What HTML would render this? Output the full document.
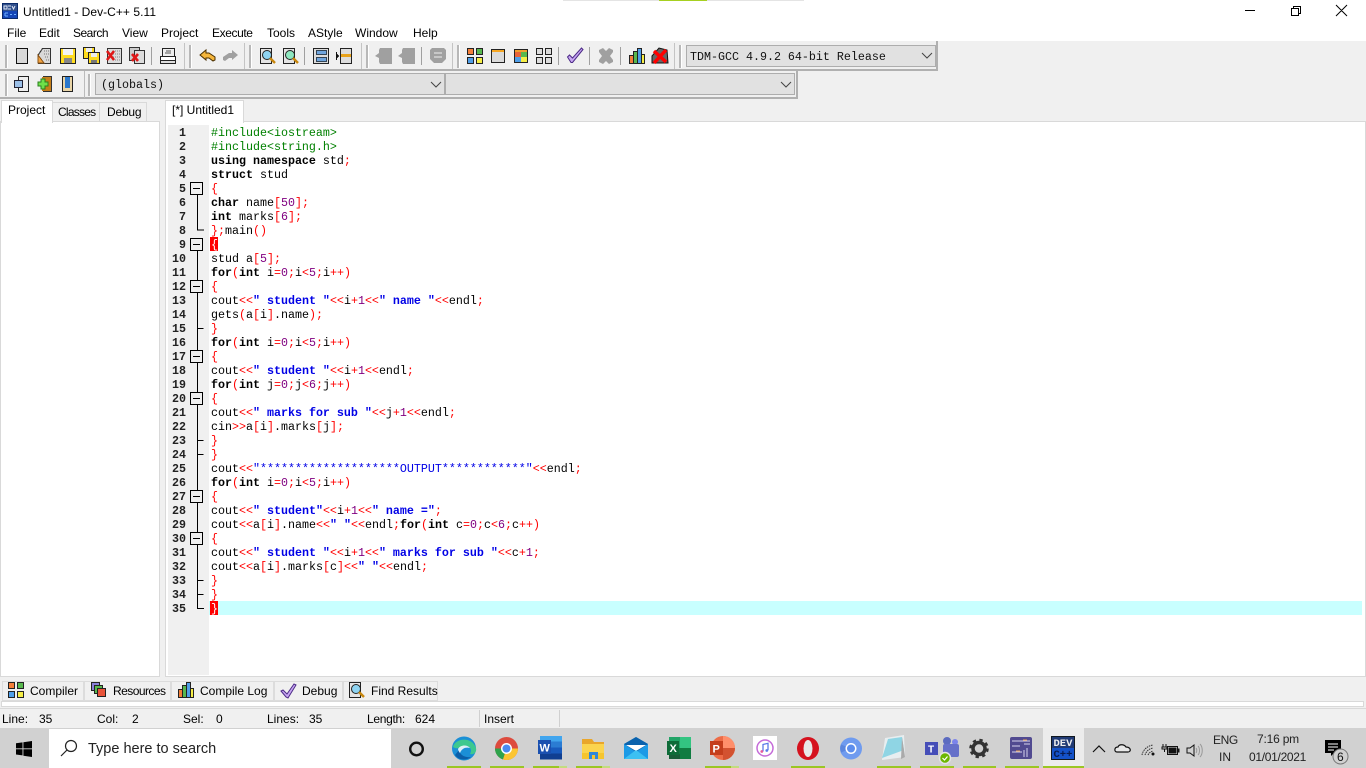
<!DOCTYPE html>
<html><head><meta charset="utf-8"><title>Untitled1 - Dev-C++ 5.11</title>
<style>
html,body{margin:0;padding:0;width:1366px;height:768px;overflow:hidden;background:#f0f0f0;font-family:"Liberation Sans",sans-serif;font-size:12px;color:#000}
.a,.t,svg.i{position:absolute}
.t{white-space:nowrap;line-height:14px}
.m{top:26px}
.gr{position:absolute;width:2px;background:#b8b8b8;box-shadow:1px 0 0 #fff}
.sp{position:absolute;width:1px;background:#a0a0a0}
.combo{position:absolute;background:#e1e1e1;border:1px solid #adadad;box-sizing:border-box;font-family:"Liberation Mono",monospace;font-size:11.67px;color:#111}
#code{position:absolute;left:0;top:1px}
#code div{position:absolute;left:211px;height:14px;line-height:14px;white-space:pre;font-family:"Liberation Mono",monospace;font-size:11.67px;color:#000}
#code b{font-weight:bold}
#code .r,#code div.r{color:#f00}#code .n{color:#800080}#code .s{color:#0000e6;font-weight:bold}#code div.p{color:#008000}#code .u{color:#0000e6}
#code div.w{color:#fff}
.ln{position:absolute;left:0;top:1px}
.ln div{position:absolute;left:170px;width:16px;text-align:right;height:14px;line-height:14px;font-family:"Liberation Mono",monospace;font-size:11.67px;font-weight:bold;color:#222}
.btab{position:absolute;top:681px;height:20px;background:#f0f0f0;border:1px solid #dcdcdc;box-sizing:border-box}
.st{top:712px}
.bar{position:absolute;top:766px;height:2px;background:#9bc623}
</style></head><body>

<!-- title bar -->
<div class="a" style="left:0;top:0;width:1366px;height:41px;background:#fff"></div>
<div class="a" style="left:563px;top:0;width:241px;height:1px;background:#e4e4e4"></div>
<div class="a" style="left:659px;top:0;width:48px;height:1px;background:#a6d020"></div>
<svg class="i" style="left:2px;top:3px" width="16" height="16" viewBox="0 0 16 16"><rect width="16" height="16" fill="#0a2a6a"/><rect x="1" y="1" width="14" height="7" fill="#31508c"/><rect x="1" y="8" width="14" height="7" fill="#1546b8"/><path d="M2 3h3v3H2zM6 3h3M6 6h3M10 3l1.500 3L13 3" stroke="#dfe6f5" fill="none"/><path d="M3 10h3M3 13h3M3 10v3M8 11.500h2M12 11.500h2" stroke="#6fb0ff"/></svg>
<div class="t" style="left:23px;top:5px;letter-spacing:.05px">Untitled1 - Dev-C++ 5.11</div>
<svg class="i" style="left:1240px;top:0" width="126" height="20" fill="none" stroke="#000"><path d="M5 10.500h10M51.500 8.500h7v7h-7zM53.500 8.500v-2h7v7h-2M96 5l11 11M107 5L96 16"/></svg>

<!-- menu -->
<div class="t m" style="left:7px">File</div>
<div class="t m" style="left:39px">Edit</div>
<div class="t m" style="left:73px;letter-spacing:-.5px">Search</div>
<div class="t m" style="left:122px">View</div>
<div class="t m" style="left:161px">Project</div>
<div class="t m" style="left:212px;letter-spacing:-.4px">Execute</div>
<div class="t m" style="left:267px">Tools</div>
<div class="t m" style="left:308px">AStyle</div>
<div class="t m" style="left:355px">Window</div>
<div class="t m" style="left:413px">Help</div>

<!-- toolbar frames -->
<div class="a" style="left:0;top:41px;width:938px;height:30px;border-right:2px solid #b0b0b0;border-bottom:2px solid #b0b0b0;box-sizing:border-box"></div>
<div class="a" style="left:0;top:70px;width:798px;height:29px;border-right:2px solid #b0b0b0;border-bottom:2px solid #b0b0b0;box-sizing:border-box"></div>
<div class="a" style="left:84px;top:71px;width:1px;height:27px;background:#bbb"></div>
<div class="a" style="left:184px;top:43px;width:1px;height:26px;background:#c4c4c4"></div>
<div class="a" style="left:244px;top:43px;width:1px;height:26px;background:#c4c4c4"></div>
<div class="a" style="left:361px;top:43px;width:1px;height:26px;background:#c4c4c4"></div>
<div class="a" style="left:452px;top:43px;width:1px;height:26px;background:#c4c4c4"></div>
<div class="a" style="left:674px;top:43px;width:1px;height:26px;background:#c4c4c4"></div>
<div class="gr" style="left:5px;top:45px;height:23px"></div>
<div class="gr" style="left:189px;top:45px;height:23px"></div>
<div class="gr" style="left:249px;top:45px;height:23px"></div>
<div class="gr" style="left:366px;top:45px;height:23px"></div>
<div class="gr" style="left:457px;top:45px;height:23px"></div>
<div class="gr" style="left:679px;top:45px;height:23px"></div>
<div class="gr" style="left:5px;top:74px;height:22px"></div>
<div class="gr" style="left:88px;top:74px;height:22px"></div>
<div class="sp" style="left:151px;top:47px;height:18px"></div>
<div class="sp" style="left:304px;top:47px;height:18px"></div>
<div class="sp" style="left:421px;top:47px;height:18px"></div>
<div class="sp" style="left:558px;top:47px;height:18px"></div>
<div class="sp" style="left:589px;top:47px;height:18px"></div>
<div class="sp" style="left:620px;top:47px;height:18px"></div>

<!-- toolbar icons -->
<svg class="i" style="left:0;top:40px" width="690" height="60" shape-rendering="crispEdges">
<rect x="16.500" y="8.500" width="11" height="15" fill="#d8d8d8" stroke="#111"/>
<path d="M42.500 8.500h8v15h-12v-9z" fill="#d9d9d9" stroke="#333"/><path d="M38 15l6 8h-6z" fill="#f2a341" stroke="#8a5316"/><path d="M44 11h5M44 14h5M45 17h4M46 20h3" stroke="#777" stroke-dasharray="1 1"/>
<rect x="60.500" y="8.500" width="15" height="15" fill="#ffdc1e" stroke="#222"/><rect x="63" y="9" width="10" height="6" fill="#f4f4f4"/><rect x="64" y="18" width="8" height="5" fill="#888"/>
<rect x="83.500" y="7.500" width="11" height="11" fill="#ffdc1e" stroke="#222"/><rect x="86" y="8" width="6" height="4" fill="#eee"/><rect x="88.500" y="12.500" width="11" height="11" fill="#ffdc1e" stroke="#222"/><rect x="91" y="13" width="6" height="4" fill="#eee"/><rect x="91" y="20" width="6" height="3" fill="#777"/>
<rect x="107.500" y="8.500" width="14" height="15" fill="#ddd" stroke="#333"/><path d="M113 11h7M113 14h7M113 17h7M113 20h7" stroke="#888" stroke-dasharray="1 1"/><g shape-rendering="auto"><path d="M107 11l7 9M114 11l-7 9" stroke="#e01818" stroke-width="2.600"/></g>
<rect x="129.500" y="7.500" width="10" height="13" fill="#ccc" stroke="#333"/><rect x="134.500" y="10.500" width="10" height="13" fill="#ddd" stroke="#333"/><g shape-rendering="auto"><path d="M132 14l6 7M138 14l-6 7" stroke="#e01818" stroke-width="2.600"/></g>
<rect x="162.500" y="8.500" width="12" height="8" fill="#eee" stroke="#222"/><rect x="160.500" y="16.500" width="15" height="4" fill="#fff" stroke="#222"/><rect x="160.500" y="20.500" width="15" height="3" fill="#ddd" stroke="#222"/><path d="M166 11h5M165 13h6" stroke="#555"/>
<g shape-rendering="auto"><path d="M200 15l6-5v3h3l6 4v3l-2 1-4-3h-3v2z" fill="#f5b63c" stroke="#4a2f00"/>
<path d="M238 15l-6-5v3h-3l-6 4v3l2 1 4-3h3v2z" fill="#a0a0a0"/></g>
<rect x="260.500" y="8.500" width="11" height="15" fill="#e4e4e4" stroke="#222"/><g shape-rendering="auto"><circle cx="267" cy="15" r="4.500" fill="#8fd4f2" stroke="#222"/><path d="M270 18l5 5" stroke="#c8870e" stroke-width="2.500"/></g>
<rect x="283.500" y="8.500" width="11" height="15" fill="#e4e4e4" stroke="#222"/><g shape-rendering="auto"><circle cx="290" cy="15" r="4.500" fill="#8fe8c0" stroke="#222"/><path d="M293 18l5 5" stroke="#c8870e" stroke-width="2.500"/></g>
<rect x="313.500" y="8.500" width="15" height="15" fill="#ddd" stroke="#222"/><rect x="316.500" y="10.500" width="10" height="4" fill="#6fa5de" stroke="#345"/><rect x="316.500" y="17.500" width="10" height="4" fill="#6fa5de" stroke="#345"/>
<rect x="340.500" y="8.500" width="11" height="15" fill="#ddd" stroke="#222"/><rect x="341" y="14" width="10" height="3" fill="#e8a21a"/><path d="M336 13l3 3-3 3z" fill="#111"/><path d="M336.500 12v8" stroke="#111"/>
<g shape-rendering="auto"><path d="M380 8h12v16h-12l-1-2v-4l-4-2 4-3v-3z" fill="#a0a0a0"/>
<path d="M403 8h12v16h-12l-1-2v-4l-4-2 4-3v-3z" fill="#a0a0a0"/>
<path d="M432 8h12l2 2v9l-4 4h-8l-4-4v-9z" fill="#a0a0a0"/><path d="M434 13h8M434 17h8" stroke="#eee"/></g>
<rect x="467.500" y="8.500" width="6" height="6" fill="#f47f3a" stroke="#222"/><rect x="476.500" y="8.500" width="6" height="6" fill="#58b84e" stroke="#222"/><rect x="467.500" y="17.500" width="6" height="6" fill="#4f9ee8" stroke="#222"/><rect x="476.500" y="17.500" width="6" height="6" fill="#f6ee46" stroke="#222"/>
<rect x="491.500" y="9.500" width="13" height="13" fill="#dadada" stroke="#222"/><rect x="492" y="10" width="12" height="2" fill="#f5a623"/>
<rect x="514.500" y="9.500" width="13" height="13" fill="#f0a030" stroke="#222"/><rect x="515" y="12" width="6" height="5" fill="#e8643a"/><rect x="521" y="12" width="6" height="5" fill="#58b84e"/><rect x="515" y="17" width="6" height="5" fill="#4f9ee8"/><rect x="521" y="17" width="6" height="5" fill="#f6ee46"/>
<rect x="536.500" y="8.500" width="6" height="6" fill="#ddd" stroke="#222"/><rect x="545.500" y="8.500" width="6" height="6" fill="#ddd" stroke="#222"/><rect x="536.500" y="17.500" width="6" height="6" fill="#ddd" stroke="#222"/><rect x="545.500" y="17.500" width="6" height="6" fill="#ddd" stroke="#222"/>
</svg>
<svg class="i" style="left:560px;top:40px" width="120" height="32">
<path d="M7.500 17l2-2 3 3 9-10 1.500 1.500-10.500 13h-1.500z" fill="#c7a6f2" stroke="#4b2a86"/>
<path d="M39 10l4-2 3 3 3-3 4 2v2l-3 4 3 4v2l-4 2-3-3-3 3-4-2v-2l3-4-3-4z" fill="#a0a0a0"/>
<g shape-rendering="crispEdges"><rect x="69.500" y="15.500" width="4" height="8" fill="#f47f3a" stroke="#222"/><rect x="73.500" y="11.500" width="4" height="12" fill="#58b84e" stroke="#222"/><rect x="77.500" y="8.500" width="4" height="15" fill="#4f9ee8" stroke="#222"/><rect x="81.500" y="14.500" width="3" height="9" fill="#f6ee46" stroke="#222"/></g>
<path d="M92 16l7-8 8 2 1 13H92z" fill="#666" stroke="#111"/><path d="M94 11l12 11M106 10L94 23" stroke="#f00" stroke-width="3.500"/>
</svg>
<svg class="i" style="left:10px;top:70px" width="70" height="28" shape-rendering="crispEdges">
<path d="M8.500 6.500h10v15h-10v-4M8.500 10.500v-4" fill="#eee" stroke="#222"/><rect x="4.500" y="10.500" width="8" height="7" fill="#9cc0e8" stroke="#223"/>
<rect x="33.500" y="6.500" width="8" height="15" fill="#b97514" stroke="#333"/><rect x="32" y="7" width="9" height="14" fill="#c57f1a"/><path d="M27.500 14h11M33 8.500v11" stroke="#2a7f1e" stroke-width="5"/><path d="M28.500 14h9M33 9.500v9" stroke="#6ee04a" stroke-width="3"/>
<rect x="52.500" y="6.500" width="10" height="15" fill="#e9d5a8" stroke="#222"/><rect x="55" y="7" width="5" height="11" fill="#2b78cc"/>
</svg>

<!-- combos -->
<div class="combo" style="left:686px;top:45px;width:250px;height:22px;padding-left:3px;line-height:22px">TDM-GCC 4.9.2 64-bit Release</div>
<svg class="i" style="left:921px;top:52px" width="12" height="8" fill="none" stroke="#444"><path d="M1 1l5 5 5-5"/></svg>
<div class="combo" style="left:95px;top:73px;width:350px;height:22px;padding-left:5px;line-height:22px">(globals)</div>
<svg class="i" style="left:430px;top:81px" width="12" height="8" fill="none" stroke="#444"><path d="M1 1l5 5 5-5"/></svg>
<div class="combo" style="left:445px;top:73px;width:350px;height:22px"></div>
<svg class="i" style="left:780px;top:81px" width="12" height="8" fill="none" stroke="#444"><path d="M1 1l5 5 5-5"/></svg>

<!-- side tabs -->
<div class="a" style="left:0;top:121px;width:160px;height:556px;background:#fff;border:1px solid #d9d9d9;box-sizing:border-box"></div>
<div class="a" style="left:1px;top:100px;width:52px;height:23px;background:#fff;border:1px solid #d9d9d9;border-bottom:none;box-sizing:border-box"></div>
<div class="a" style="left:53px;top:102px;width:47px;height:20px;background:#f0f0f0;border:1px solid #d9d9d9;border-left:none;box-sizing:border-box"></div>
<div class="a" style="left:100px;top:102px;width:47px;height:20px;background:#f0f0f0;border:1px solid #d9d9d9;border-left:none;box-sizing:border-box"></div>
<div class="t" style="left:8px;top:103px">Project</div>
<div class="t" style="left:58px;top:105px;letter-spacing:-.75px">Classes</div>
<div class="t" style="left:107px;top:105px;letter-spacing:-.2px">Debug</div>

<!-- editor -->
<div class="a" style="left:165px;top:121px;width:1201px;height:556px;background:#fff;border:1px solid #d9d9d9;box-sizing:border-box"></div>
<div class="a" style="left:165px;top:100px;width:79px;height:23px;background:#fff;border:1px solid #d9d9d9;border-bottom:none;box-sizing:border-box"></div>
<div class="t" style="left:172px;top:103px">[*] Untitled1</div>
<div class="a" style="left:168px;top:125px;width:41px;height:550px;background:#f0f0f0"></div>
<div class="a" style="left:209px;top:601px;width:1153px;height:14px;background:#c8ffff"></div>
<div class="a" style="left:210px;top:237px;width:8px;height:14px;background:#f00"></div>
<div class="a" style="left:210px;top:601px;width:8px;height:14px;background:#f00"></div>

<div class="ln">
<div style="top:125px">1</div><div style="top:139px">2</div><div style="top:153px">3</div><div style="top:167px">4</div><div style="top:181px">5</div><div style="top:195px">6</div><div style="top:209px">7</div><div style="top:223px">8</div><div style="top:237px">9</div><div style="top:251px">10</div><div style="top:265px">11</div><div style="top:279px">12</div><div style="top:293px">13</div><div style="top:307px">14</div><div style="top:321px">15</div><div style="top:335px">16</div><div style="top:349px">17</div><div style="top:363px">18</div><div style="top:377px">19</div><div style="top:391px">20</div><div style="top:405px">21</div><div style="top:419px">22</div><div style="top:433px">23</div><div style="top:447px">24</div><div style="top:461px">25</div><div style="top:475px">26</div><div style="top:489px">27</div><div style="top:503px">28</div><div style="top:517px">29</div><div style="top:531px">30</div><div style="top:545px">31</div><div style="top:559px">32</div><div style="top:573px">33</div><div style="top:587px">34</div><div style="top:601px">35</div>
</div>

<svg class="i" style="left:185px;top:120px" width="24" height="500" shape-rendering="crispEdges" fill="#f0f0f0" stroke="#000">
<path d="M12.500 70v40h6.500M12.500 124v364.500h6.500M12.500 208.500h6M12.500 320.500h6M12.500 334.500h6M12.500 460.500h6M12.500 474.500h6" fill="none"/>
<rect x="5.500" y="62.500" width="12" height="12" /><path d="M8 68.500h7"/>
<rect x="5.500" y="118.500" width="12" height="12"/><path d="M8 124.500h7"/>
<rect x="5.500" y="160.500" width="12" height="12"/><path d="M8 166.500h7"/>
<rect x="5.500" y="230.500" width="12" height="12"/><path d="M8 236.500h7"/>
<rect x="5.500" y="272.500" width="12" height="12"/><path d="M8 278.500h7"/>
<rect x="5.500" y="370.500" width="12" height="12"/><path d="M8 376.500h7"/>
<rect x="5.500" y="412.500" width="12" height="12"/><path d="M8 418.500h7"/>
</svg>

<div id="code">
<div style="top:125px" class="p">#include&lt;iostream&gt;</div>
<div style="top:139px" class="p">#include&lt;string.h&gt;</div>
<div style="top:153px"><b>using namespace</b> std<span class="r">;</span></div>
<div style="top:167px"><b>struct</b> stud</div>
<div style="top:181px" class="r">{</div>
<div style="top:195px"><b>char</b> name<span class="r">[</span><span class="n">50</span><span class="r">];</span></div>
<div style="top:209px"><b>int</b> marks<span class="r">[</span><span class="n">6</span><span class="r">];</span></div>
<div style="top:223px"><span class="r">};</span>main<span class="r">()</span></div>
<div style="top:237px" class="w">{</div>
<div style="top:251px">stud a<span class="r">[</span><span class="n">5</span><span class="r">];</span></div>
<div style="top:265px"><b>for</b><span class="r">(</span><b>int</b> i<span class="r">=</span><span class="n">0</span><span class="r">;</span>i<span class="r">&lt;</span><span class="n">5</span><span class="r">;</span>i<span class="r">++)</span></div>
<div style="top:279px" class="r">{</div>
<div style="top:293px">cout<span class="r">&lt;&lt;</span><span class="s">" student "</span><span class="r">&lt;&lt;</span>i<span class="r">+</span><span class="n">1</span><span class="r">&lt;&lt;</span><span class="s">" name "</span><span class="r">&lt;&lt;</span>endl<span class="r">;</span></div>
<div style="top:307px">gets<span class="r">(</span>a<span class="r">[</span>i<span class="r">]</span>.name<span class="r">);</span></div>
<div style="top:321px" class="r">}</div>
<div style="top:335px"><b>for</b><span class="r">(</span><b>int</b> i<span class="r">=</span><span class="n">0</span><span class="r">;</span>i<span class="r">&lt;</span><span class="n">5</span><span class="r">;</span>i<span class="r">++)</span></div>
<div style="top:349px" class="r">{</div>
<div style="top:363px">cout<span class="r">&lt;&lt;</span><span class="s">" student "</span><span class="r">&lt;&lt;</span>i<span class="r">+</span><span class="n">1</span><span class="r">&lt;&lt;</span>endl<span class="r">;</span></div>
<div style="top:377px"><b>for</b><span class="r">(</span><b>int</b> j<span class="r">=</span><span class="n">0</span><span class="r">;</span>j<span class="r">&lt;</span><span class="n">6</span><span class="r">;</span>j<span class="r">++)</span></div>
<div style="top:391px" class="r">{</div>
<div style="top:405px">cout<span class="r">&lt;&lt;</span><span class="s">" marks for sub "</span><span class="r">&lt;&lt;</span>j<span class="r">+</span><span class="n">1</span><span class="r">&lt;&lt;</span>endl<span class="r">;</span></div>
<div style="top:419px">cin<span class="r">&gt;&gt;</span>a<span class="r">[</span>i<span class="r">]</span>.marks<span class="r">[</span>j<span class="r">];</span></div>
<div style="top:433px" class="r">}</div>
<div style="top:447px" class="r">}</div>
<div style="top:461px">cout<span class="r">&lt;&lt;</span><span class="u">"********************OUTPUT************"</span><span class="r">&lt;&lt;</span>endl<span class="r">;</span></div>
<div style="top:475px"><b>for</b><span class="r">(</span><b>int</b> i<span class="r">=</span><span class="n">0</span><span class="r">;</span>i<span class="r">&lt;</span><span class="n">5</span><span class="r">;</span>i<span class="r">++)</span></div>
<div style="top:489px" class="r">{</div>
<div style="top:503px">cout<span class="r">&lt;&lt;</span><span class="s">" student"</span><span class="r">&lt;&lt;</span>i<span class="r">+</span><span class="n">1</span><span class="r">&lt;&lt;</span><span class="s">" name ="</span><span class="r">;</span></div>
<div style="top:517px">cout<span class="r">&lt;&lt;</span>a<span class="r">[</span>i<span class="r">]</span>.name<span class="r">&lt;&lt;</span><span class="s">" "</span><span class="r">&lt;&lt;</span>endl<span class="r">;</span><b>for</b><span class="r">(</span><b>int</b> c<span class="r">=</span><span class="n">0</span><span class="r">;</span>c<span class="r">&lt;</span><span class="n">6</span><span class="r">;</span>c<span class="r">++)</span></div>
<div style="top:531px" class="r">{</div>
<div style="top:545px">cout<span class="r">&lt;&lt;</span><span class="s">" student "</span><span class="r">&lt;&lt;</span>i<span class="r">+</span><span class="n">1</span><span class="r">&lt;&lt;</span><span class="s">" marks for sub "</span><span class="r">&lt;&lt;</span>c<span class="r">+</span><span class="n">1</span><span class="r">;</span></div>
<div style="top:559px">cout<span class="r">&lt;&lt;</span>a<span class="r">[</span>i<span class="r">]</span>.marks<span class="r">[</span>c<span class="r">]&lt;&lt;</span><span class="s">" "</span><span class="r">&lt;&lt;</span>endl<span class="r">;</span></div>
<div style="top:573px" class="r">}</div>
<div style="top:587px" class="r">}</div>
<div style="top:601px" class="w">}</div>
</div>

<!-- bottom tabs -->
<div class="btab" style="left:2px;width:82px"></div>
<div class="btab" style="left:84px;width:87px"></div>
<div class="btab" style="left:171px;width:103px"></div>
<div class="btab" style="left:274px;width:69px"></div>
<div class="btab" style="left:343px;width:95px"></div>
<div class="a" style="left:1px;top:701px;width:1363px;height:6px;background:#fff;border:1px solid #d9d9d9;box-sizing:border-box"></div>
<div class="t" style="left:30px;top:684px">Compiler</div>
<div class="t" style="left:113px;top:684px;letter-spacing:-.55px">Resources</div>
<div class="t" style="left:200px;top:684px">Compile Log</div>
<div class="t" style="left:302px;top:684px">Debug</div>
<div class="t" style="left:371px;top:684px">Find Results</div>
<svg class="i" style="left:0;top:680px" width="380" height="22" shape-rendering="crispEdges">
<rect x="8.500" y="2.500" width="6" height="6" fill="#f47f3a" stroke="#222"/><rect x="17.500" y="2.500" width="6" height="6" fill="#58b84e" stroke="#222"/><rect x="8.500" y="11.500" width="6" height="6" fill="#4f9ee8" stroke="#222"/><rect x="17.500" y="11.500" width="6" height="6" fill="#f6ee46" stroke="#222"/>
<rect x="91.500" y="2.500" width="8" height="8" fill="#8a80d8" stroke="#222"/><rect x="94.500" y="5.500" width="8" height="8" fill="#58b84e" stroke="#222"/><rect x="97.500" y="8.500" width="8" height="8" fill="#e8543a" stroke="#222"/>
<rect x="178.500" y="9.500" width="4" height="8" fill="#f47f3a" stroke="#222"/><rect x="182.500" y="5.500" width="4" height="12" fill="#58b84e" stroke="#222"/><rect x="186.500" y="2.500" width="4" height="15" fill="#4f9ee8" stroke="#222"/><rect x="190.500" y="8.500" width="3" height="9" fill="#f6ee46" stroke="#222"/>
<g shape-rendering="auto"><path d="M281 11l5 6 2 1 8-13-2-1-7 10-4-4z" fill="#c7a6f2" stroke="#4b2a86"/></g>
<rect x="349.500" y="2.500" width="11" height="15" fill="#e4e4e4" stroke="#222"/><g shape-rendering="auto"><circle cx="356" cy="9" r="4.500" fill="#8fd4f2" stroke="#222"/><path d="M359 12l5 5" stroke="#c8870e" stroke-width="2.500"/></g>
</svg>

<!-- status -->
<div class="a" style="left:0;top:708px;width:1366px;height:1px;background:#d9d9d9"></div>
<div class="t st" style="left:2px">Line:</div><div class="t st" style="left:39px">35</div>
<div class="t st" style="left:97px">Col:</div><div class="t st" style="left:132px">2</div>
<div class="t st" style="left:183px">Sel:</div><div class="t st" style="left:216px">0</div>
<div class="t st" style="left:267px">Lines:</div><div class="t st" style="left:309px">35</div>
<div class="t st" style="left:367px;letter-spacing:-.3px">Length:</div><div class="t st" style="left:415px">624</div>
<div class="t st" style="left:484px">Insert</div>
<div class="a" style="left:479px;top:710px;width:1px;height:17px;background:#d0d0d0"></div>
<div class="a" style="left:559px;top:710px;width:1px;height:17px;background:#d0d0d0"></div>

<!-- taskbar -->
<div class="a" style="left:0;top:728px;width:1366px;height:40px;background:#d1d1d1"></div>
<div class="a" style="left:49px;top:729px;width:342px;height:39px;background:#fff"></div>
<div class="a" style="left:1043px;top:728px;width:41px;height:40px;background:#ececec"></div>
<svg class="i" style="left:16px;top:741px" width="16" height="16" fill="#000"><path d="M0 2.300L6.500 1.400V7.400H0zM7.400 1.300L16 0V7.400H7.400zM0 8.300H6.500V14.400L0 13.500zM7.400 8.300H16V16L7.400 14.700z"/></svg>
<svg class="i" style="left:60px;top:739px" width="18" height="18" fill="none" stroke="#222" stroke-width="1.200"><circle cx="11" cy="7" r="5.500"/><path d="M7 11l-6 6"/></svg>
<div class="t" style="left:88px;top:741px;font-size:14.500px;line-height:16px;color:#222">Type here to search</div>
<svg class="i" style="left:408px;top:740px" width="18" height="18" fill="none" stroke="#111" stroke-width="2.400"><circle cx="8.500" cy="9" r="6.300"/></svg>

<svg class="i" style="left:440px;top:730px" width="660" height="36">
<!-- edge -->
<circle cx="24" cy="18.500" r="12" fill="#1b8fd6"/><path d="M13 17c2-9 19-11 23 1 1 4-2 7-6 6 3-5-1-9-6-8-4 1-6 4-11 1z" fill="#3ec88f"/><path d="M19 20c1 5 6 8 12 7-5 4-13 3-16-2z" fill="#0b5fa8"/><path d="M18 19c2-4 9-5 12-1-4-1-8 0-10 5-1-1-2-3-2-4z" fill="#fff" opacity=".85"/>
<!-- chrome -->
<circle cx="66.500" cy="18.500" r="11.500" fill="#dd4b3e"/><path d="M66.500 18.500L55 18.500a11.500 11.500 0 0 0 8 11z" fill="#2fa34c"/><path d="M66.500 18.500l-3.500 11a11.500 11.500 0 0 0 15-11z" fill="#fbc531"/><circle cx="66.500" cy="18.500" r="5.500" fill="#fff"/><circle cx="66.500" cy="18.500" r="4" fill="#4a8af0"/>
<!-- word -->
<rect x="100" y="6" width="22" height="5.500" fill="#41a5ee"/><rect x="100" y="11.500" width="22" height="6" fill="#2b7cd3"/><rect x="100" y="17.500" width="22" height="6" fill="#185abd"/><rect x="100" y="23.500" width="22" height="6" fill="#103f91"/><rect x="98" y="10" width="13" height="14" fill="#1a50b0"/><text x="99.500" y="21.500" font-family="Liberation Sans" font-size="11" font-weight="bold" fill="#fff">W</text>
<!-- explorer -->
<path d="M142 9h10l2 3h10v5h-22z" fill="#e9a62b"/><rect x="142" y="14" width="22" height="15" fill="#fbd44e"/><rect x="142" y="23" width="22" height="6" fill="#f6c52e"/><path d="M149 29v-7h9v7h-3v-4h-3v4z" fill="#2f86d8"/>
<!-- mail -->
<path d="M184 14l12-7 12 7v15h-24z" fill="#1c9ae6"/><path d="M184 14l12-7 12 7-12 8z" fill="#0b62ad"/><path d="M186 15h20l-10 6z" fill="#fff"/><path d="M184 29l12-9 12 9z" fill="#3cc0f2"/>
<!-- excel -->
<rect x="229" y="7" width="22" height="22" fill="#21a366"/><rect x="240" y="7" width="11" height="11" fill="#33c481"/><rect x="229" y="18" width="22" height="11" fill="#107c41"/><rect x="229" y="24" width="11" height="5" fill="#185c37"/><rect x="227" y="11" width="12" height="14" fill="#0e6b38"/><text x="229.500" y="22" font-family="Liberation Sans" font-size="11" font-weight="bold" fill="#fff">X</text>
<!-- ppt -->
<circle cx="283" cy="18" r="12" fill="#ed6c47"/><path d="M283 6a12 12 0 0 1 12 12h-12z" fill="#ff8f6b"/><path d="M283 18h12a12 12 0 0 1-12 12z" fill="#d35230"/><rect x="270" y="11" width="13" height="14" fill="#c43e1c"/><text x="272.500" y="22.500" font-family="Liberation Sans" font-size="11" font-weight="bold" fill="#fff">P</text>
<!-- itunes -->
<rect x="313" y="6" width="24" height="24" fill="#fff"/><circle cx="325" cy="18" r="8" fill="none" stroke="#c46ad8" stroke-width="1.500"/><path d="M323 21.500v-7l5-1.200v7" fill="none" stroke="#5a7ae8" stroke-width="1.300"/><circle cx="321.800" cy="21.500" r="1.400" fill="#e85a9a"/><circle cx="326.800" cy="20.500" r="1.400" fill="#5a7ae8"/>
<!-- opera -->
<ellipse cx="368" cy="18.500" rx="11" ry="11.500" fill="#d5121e"/><ellipse cx="368" cy="18.500" rx="4.500" ry="8.500" fill="#e8e8e8"/>
<!-- chromium -->
<circle cx="411" cy="18.500" r="11" fill="#6f9bef"/><path d="M411 18.500l-10 4a11 11 0 0 1 0-8z" fill="#5b86de"/><circle cx="411" cy="18.500" r="5.500" fill="#fff"/><circle cx="411" cy="18.500" r="4" fill="#5c8ded"/>
<!-- notepad -->
<path d="M445 8l19-3 1 22-23 3z" fill="#e8eef0"/><path d="M448 9l14-2 2 13-22 8z" fill="#8fd5e4"/><path d="M462 7l3 20-4 2z" fill="#aaa"/>
<!-- teams -->
<circle cx="507" cy="11" r="4" fill="#5c6bc0"/><circle cx="515" cy="12" r="3" fill="#7b83eb"/><rect x="503" y="14" width="16" height="13" rx="2" fill="#6670c9"/><rect x="485" y="12" width="13" height="13" fill="#464eb8"/><text x="488" y="22.500" font-family="Liberation Sans" font-size="10" font-weight="bold" fill="#fff">T</text><circle cx="505" cy="28" r="5.500" fill="#6bb700" stroke="#e4e4e4" stroke-width="1.500"/><path d="M502.500 28l2 2 3-3.500" stroke="#fff" fill="none" stroke-width="1.200"/>
<!-- gear -->
<circle cx="539" cy="18.500" r="6" fill="none" stroke="#333" stroke-width="3.500"/><circle cx="539" cy="18.500" r="8.500" fill="none" stroke="#333" stroke-width="2.500" stroke-dasharray="3.300 3.400"/>
<!-- app -->
<rect x="570" y="7" width="22" height="22" rx="2" fill="#514a90"/><path d="M572 11h18M572 16h8M584 14h6M572 22h10M584 20v7M587 18v9" stroke="#d8d4ee" fill="none"/><path d="M583 10h4M576 21h4" stroke="#e8a050"/>
<!-- dev -->
<rect x="611.500" y="6.500" width="23" height="23" fill="#0d2a6e" stroke="#101820"/><rect x="612" y="7" width="22" height="11" fill="#203a74"/><rect x="612" y="18" width="22" height="11" fill="#1452c8"/><text x="613.500" y="16" font-family="Liberation Mono" font-size="10.500" font-weight="bold" fill="#eee">DEV</text><text x="613.500" y="27" font-family="Liberation Mono" font-size="10.500" font-weight="bold" fill="#081c50">C++</text>
</svg>

<!-- running bars -->
<div class="bar" style="left:447px;width:34px"></div>
<div class="bar" style="left:490px;width:34px"></div>
<div class="bar" style="left:533px;width:26px"></div><div class="bar" style="left:559px;width:8px;background:#c3dc80"></div>
<div class="bar" style="left:576px;width:26px"></div><div class="bar" style="left:602px;width:8px;background:#c3dc80"></div>
<div class="bar" style="left:705px;width:26px"></div><div class="bar" style="left:731px;width:8px;background:#c3dc80"></div>
<div class="bar" style="left:791px;width:34px"></div>
<div class="bar" style="left:877px;width:34px"></div>
<div class="bar" style="left:920px;width:34px"></div>
<div class="bar" style="left:963px;width:33px"></div>
<div class="bar" style="left:1005px;width:34px"></div>
<div class="bar" style="left:1043px;width:41px"></div>

<!-- tray -->
<svg class="i" style="left:1090px;top:738px" width="240" height="22" fill="none" stroke="#111">
<path d="M3 14l6-6 6 6" stroke-width="1.200"/>
<path d="M27 14c-3 0-3-5 1-5 1-3 6-3 8 0 3 0 5 2 4 4-1 1-1 1-2 1z" fill="#e8e8e8" stroke-width="1.200"/>
<path d="M52 17c1-5 5-9 11-10M55 17c1-3 3-6 8-7M58 17c1-2 2-3 5-4" stroke="#333" stroke-dasharray="1.500 .8"/>
<circle cx="63" cy="16" r="1" fill="#111"/>
<path d="M73 6v3M76 6v3M72 9h5v2h-5zM74.500 11v3" stroke-width="1"/><rect x="77.500" y="8.500" width="10" height="8" /><rect x="79" y="10" width="7" height="5" fill="#111"/><rect x="88" y="11" width="1" height="3" fill="#111"/>
<path d="M97 10v5h3l4 3V7l-4 3z" stroke-width="1"/><path d="M106 10c1 1 1 4 0 5M108 8c2 2 2 7 0 9M110 6c3 3 3 10 0 13" stroke="#999"/>
</svg>
<div class="t" style="left:1213px;top:733px;color:#222;letter-spacing:-.4px">ENG</div>
<div class="t" style="left:1219px;top:750px;color:#222">IN</div>
<div class="t" style="left:1257px;top:732px;color:#222;letter-spacing:-.2px">7:16 pm</div>
<div class="t" style="left:1249px;top:750px;color:#222;letter-spacing:-.3px">01/01/2021</div>
<svg class="i" style="left:1322px;top:738px" width="30" height="28"><path d="M3 2h16v13h-7l-3 3v-3H3z" fill="#000"/><path d="M6 6h10M6 9h10M6 12h6" stroke="#fff"/><circle cx="18.500" cy="18.500" r="7.500" fill="#d1d1d1" stroke="#777"/></svg>
<div class="t" style="left:1337px;top:750px;font-size:12px;color:#111">6</div>

</body></html>
